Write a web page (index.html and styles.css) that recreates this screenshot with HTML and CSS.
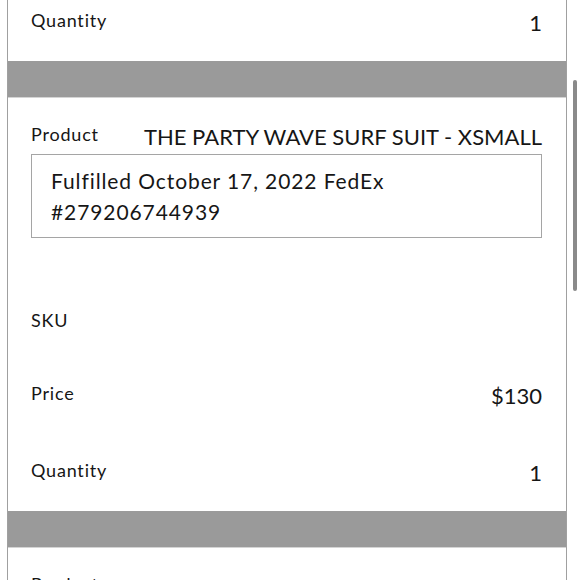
FILE: index.html
```html
<!DOCTYPE html>
<html lang="en">
<head>
<meta charset="utf-8">
<title>Order details</title>
<link rel="stylesheet" href="styles.css">
</head>
<body>
<div class="table">
  <div class="row">
    <span class="label">Quantity</span>
    <span class="value">1</span>
  </div>
  <div class="band"></div>
  <div class="item">
    <div class="row-line">
      <span class="label">Product</span>
      <span class="value caps">THE PARTY WAVE SURF SUIT - XSMALL</span>
    </div>
    <div class="fulfill">Fulfilled October 17, 2022 FedEx<br>#279206744939</div>
  </div>
  <div class="row">
    <span class="label">SKU</span>
  </div>
  <div class="row">
    <span class="label">Price</span>
    <span class="value">$130</span>
  </div>
  <div class="row">
    <span class="label">Quantity</span>
    <span class="value">1</span>
  </div>
  <div class="band"></div>
  <div class="item">
    <div class="row-line">
      <span class="label">Product</span>
      <span class="value caps">NEVER ENDING SUMMER SUIT - XSMALL</span>
    </div>
  </div>
</div>
<div class="scrollbar"></div>
</body>
</html>
```
FILE: styles.css
```css
html, body {
  margin: 0;
  padding: 0;
  background: #ffffff;
  overflow: hidden;
}
body {
  font-family: Lato, "Liberation Sans", sans-serif;
  color: #161616;
}
.table {
  margin: -16px 0 0 7px;
  width: 558px;
  border-left: 1px solid #a0a0a0;
  border-right: 1px solid #a0a0a0;
}
.row,
.row-line {
  display: flex;
  justify-content: space-between;
  align-items: flex-start;
}
.row {
  padding: 24px 24px 24px 23px;
}
.item {
  padding: 24px 24px 24px 23px;
}
.label {
  font-size: 18px;
  line-height: 25px;
  letter-spacing: 0.8px;
}
.value {
  font-size: 22px;
  line-height: 29px;
}
.caps {
  letter-spacing: 0;
}
.band {
  height: 36px;
  background: #9a9a9a;
  border-bottom: 1px solid #d4d4d4;
}
.fulfill {
  margin: 3px 0 22px;
  border: 1px solid #a5a5a5;
  padding: 10px 19px;
  font-size: 21px;
  line-height: 31px;
  letter-spacing: 0.9px;
}
.scrollbar {
  position: fixed;
  top: 80px;
  right: 3px;
  width: 4px;
  height: 211px;
  border-radius: 2px;
  background: #8a8a8a;
}
```
